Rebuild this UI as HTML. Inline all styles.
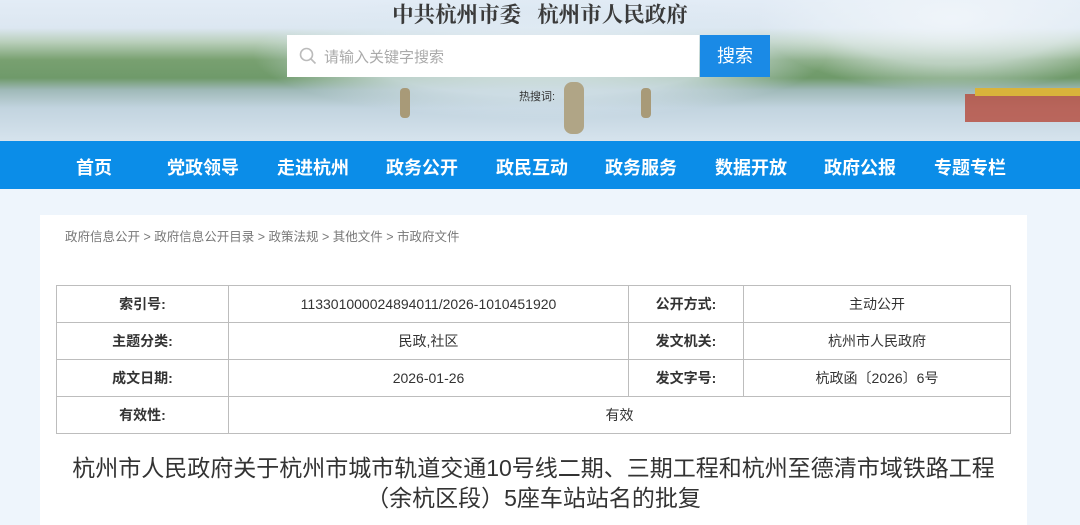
<!DOCTYPE html>
<html><head><meta charset="utf-8"><style>
*{margin:0;padding:0;box-sizing:border-box}
body{width:1080px;height:520px;overflow:hidden;background:#eef5fc;font-family:"Liberation Sans","Noto Sans CJK SC",sans-serif;position:relative}
.ban{position:absolute;left:0;top:0;width:1080px;height:141px;background:linear-gradient(180deg,#e3ecf6 0,#dce7f1 28px,#b9cfbb 42px,#78a070 60px,#6f9a6a 78px,#9fb9b8 90px,#c2d4df 108px,#d6e3ed 141px)}
.mid{position:absolute;left:250px;top:0;width:580px;height:120px;background:radial-gradient(ellipse at 50% 45%,rgba(228,237,245,.95) 0,rgba(220,232,242,.7) 45%,rgba(220,232,242,0) 70%)}
.right{position:absolute;left:760px;top:0;width:320px;height:90px;background:radial-gradient(ellipse at 60% 20%,rgba(240,245,250,.95) 0,rgba(235,242,248,.6) 45%,rgba(235,242,248,0) 72%)}
.t{position:absolute;top:-2px;left:0;width:1080px;text-align:center;font-family:"Liberation Serif","Noto Serif CJK SC",serif;font-weight:bold;font-size:21.5px;color:#3a3a3a}
.sb{position:absolute;left:287px;top:35px;width:412px;height:42px;background:#fff}
.sb span{position:absolute;left:37px;top:11px;font-size:15px;color:#aaa}
.btn{position:absolute;left:700px;top:35px;width:70px;height:42px;background:#1a8ae6;color:#fff;font-size:18px;text-align:center;line-height:42px}
.hot{position:absolute;left:519px;top:88px;font-size:11px;color:#333}
.nav{position:absolute;left:0;top:141px;width:1080px;height:48px;background:#0b8de8}
.nav span{position:absolute;top:13px;font-size:18px;font-weight:bold;color:#fff}
.box{position:absolute;left:40px;top:215px;width:987px;height:310px;background:#fff}
.bc{position:absolute;left:65px;top:226px;font-size:12.5px;color:#777}
table{position:absolute;left:56px;top:285px;width:955px;border-collapse:collapse;font-size:14px;color:#333}
td{border:1px solid #bdbdbd;height:37px;text-align:center}
td.k{font-weight:bold}
.ti{position:absolute;left:0;width:1067px;text-align:center;font-size:23px;color:#333}
</style></head><body>
<div class="ban"><div class="mid"></div><div class="right"></div>
<div style="position:absolute;left:965px;top:94px;width:115px;height:28px;background:#b5483a;opacity:.8"></div>
<div style="position:absolute;left:975px;top:88px;width:105px;height:8px;background:#d9b33b"></div>
<div style="position:absolute;left:400px;top:88px;width:10px;height:30px;background:#a89a78;border-radius:4px"></div>
<div style="position:absolute;left:564px;top:82px;width:20px;height:52px;background:#b0a586;border-radius:8px"></div>
<div style="position:absolute;left:641px;top:88px;width:10px;height:30px;background:#a89a78;border-radius:4px"></div>
</div>
<div class="t">中共杭州市委&nbsp;&nbsp;&nbsp;杭州市人民政府</div>
<div class="sb"><svg style="position:absolute;left:12px;top:12px" width="18" height="18" viewBox="0 0 18 18"><circle cx="7.5" cy="7.5" r="6" fill="none" stroke="#bbb" stroke-width="1.6"/><path d="M12 12l4.5 4.5" stroke="#bbb" stroke-width="1.6"/></svg><span>请输入关键字搜索</span></div>
<div class="btn">搜索</div>
<div class="hot">热搜词:</div>
<div class="nav">
<span style="left:76px">首页</span><span style="left:167px">党政领导</span><span style="left:277px">走进杭州</span><span style="left:386px">政务公开</span><span style="left:496px">政民互动</span><span style="left:605px">政务服务</span><span style="left:715px">数据开放</span><span style="left:824px">政府公报</span><span style="left:934px">专题专栏</span>
</div>
<div class="box"></div>
<div class="bc">政府信息公开 &gt; 政府信息公开目录 &gt; 政策法规 &gt; 其他文件 &gt; 市政府文件</div>
<table>
<tr><td class="k" style="width:172px">索引号:</td><td style="width:400px">113301000024894011/2026-1010451920</td><td class="k" style="width:115px">公开方式:</td><td>主动公开</td></tr>
<tr><td class="k">主题分类:</td><td>民政,社区</td><td class="k">发文机关:</td><td>杭州市人民政府</td></tr>
<tr><td class="k">成文日期:</td><td>2026-01-26</td><td class="k">发文字号:</td><td>杭政函〔2026〕6号</td></tr>
<tr><td class="k">有效性:</td><td colspan="3">有效</td></tr>
</table>
<div class="ti" style="top:449px">杭州市人民政府关于杭州市城市轨道交通10号线二期、三期工程和杭州至德清市域铁路工程</div>
<div class="ti" style="top:479px">（余杭区段）5座车站站名的批复</div>
</body></html>
